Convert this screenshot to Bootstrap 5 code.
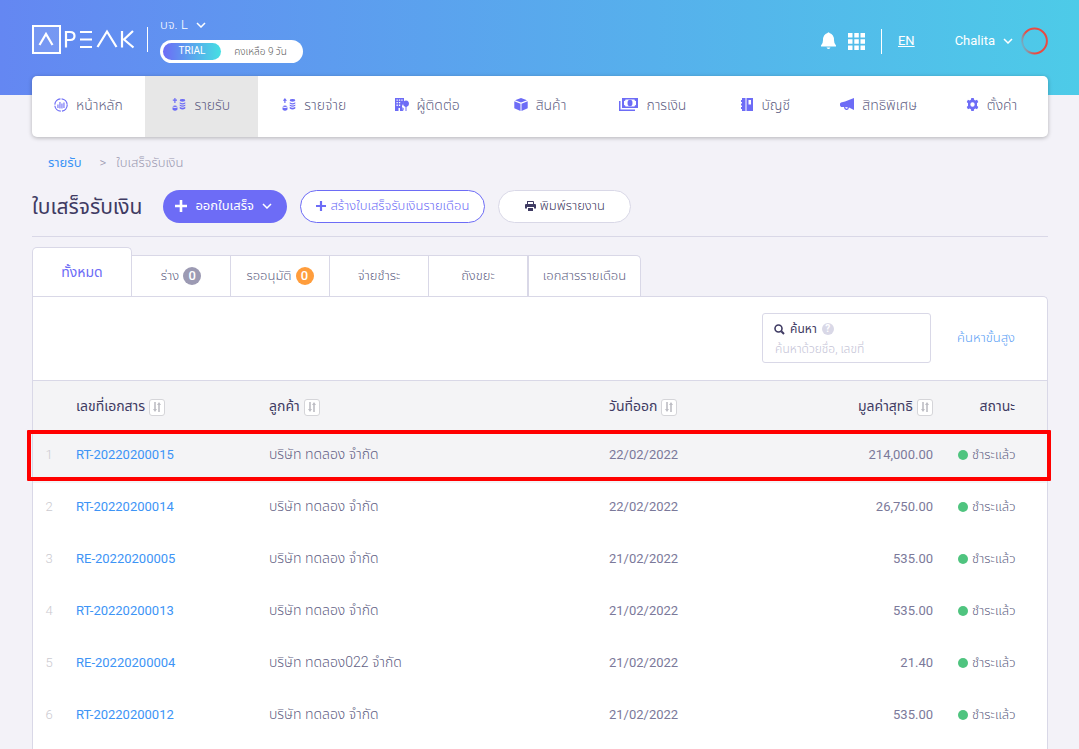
<!DOCTYPE html>
<html lang="th">
<head>
<meta charset="utf-8">
<meta name="viewport" content="width=device-width, initial-scale=1">
<title>ใบเสร็จรับเงิน</title>
<link href="https://cdn.jsdelivr.net/npm/bootstrap@5.3.0/dist/css/bootstrap.min.css" rel="stylesheet">
<style>
:root{--brand:#6d6cf6;--line:#d9d8e7;--ink:#625f84;--dark:#3f3b63;--sky:#3d94f6}
body{font-family:Roboto,"Noto Sans Thai","Noto Sans",sans-serif;font-size:13px;line-height:20px;font-weight:300;color:var(--ink);background:#f3f2f8}
a{text-decoration:none;color:var(--sky)}
svg{fill:currentColor;flex:none}
.shell{padding:0 31px 0 32px}
.topbar{background:linear-gradient(90deg,#6487f2,#4dcbe8);height:95px;color:#fff}
.topbar a,.topbar button{color:#fff}
.brand-row{padding-top:15px;gap:12px}
.plain-btn{background:none;border:0;padding:0;font-weight:300}
.vline{width:1px;height:25px;background:#fff}
.brand-line{margin-top:12px}
.trial{width:143px;height:23px;font-size:10px;background:#fff;color:#5b5b5b;padding:3px;margin-top:5px}
.trial-tag{width:58px;height:17px;line-height:16px;background:linear-gradient(90deg,#6d6cf6,#45e0e3);color:#fff;font-weight:400}
.main-menu{margin-top:-19px;height:61px;background:#fff;border-radius:5px;box-shadow:0 1px 4px #0004}
.main-menu a{flex:1 1 0;color:var(--ink);font-size:14px;padding-bottom:4px}
.main-menu a.active{background:#e7e7e7}
.main-menu svg{color:var(--brand)}
.crumbs{gap:10px;color:#9a98b0}
.page-title{font-size:21px;line-height:32px;font-weight:400;color:var(--dark)}
.title-row{padding:17px 0 13px;gap:13px;border-bottom:1px solid var(--line);margin-bottom:10px}
.pill{height:33px;border-radius:17px;font-size:13px;font-weight:300;line-height:20px;padding:0 11px 2px}
.pill-brand,.pill-brand:hover{background:var(--brand);color:#fff;width:124px;font-weight:400}
.pill-line,.pill-line:hover{background:#fff;border-color:var(--brand);color:var(--brand);width:185px}
.pill-gray,.pill-gray:hover{background:#fff;border-color:var(--line);color:var(--dark);width:133px}
.tab-row a{width:99px;height:41px;background:#fff;border:1px solid var(--line);border-left:0;border-bottom:0;color:var(--ink)}
.tab-row a.active{width:100px;height:49px;border-left:1px solid var(--line);border-radius:5px 5px 0 0;color:var(--brand);font-size:14px;font-weight:400}
.tab-row a.wide{width:113px;border-left:1px solid var(--line);border-radius:0 5px 0 0}
.count{width:18px;height:18px;line-height:18px;border-radius:9px;color:#fff;font-weight:500;background:#9c9ab3}
.count.wait{background:#ff9d3c}
.panel{background:#fff;border:1px solid var(--line);border-bottom:0;border-radius:0 5px 0 0}
.tools{padding:16px 32px 17px;gap:26px}
.tools>a{color:#5b9ff5}
.search-box{width:169px;height:50px;border:1px solid var(--line);border-radius:3px;padding:5px 11px}
.search-box label{color:var(--dark);font-size:12px;font-weight:400;line-height:20px;gap:5px}
.search-box input{border:0;padding:0 1px;width:100%;height:18px;font-size:12px;font-weight:300;outline:0}
.search-box input::placeholder{color:#c4c3d6;opacity:1}
.help{width:12px;height:12px;line-height:12px;font-size:10px;border-radius:6px;background:var(--line);color:#fff;font-weight:700}
.docs{table-layout:fixed;border-collapse:separate;border-spacing:0}
.docs th{height:51px;background:#f4f4f6;border-top:1px solid var(--line);font-size:14px;font-weight:400;color:var(--dark);padding:0;white-space:nowrap}
.docs td{height:52px;padding:0 0 5px;white-space:nowrap}
.docs .picked td{background:#f4f4f6}
.docs td.num{text-align:center;color:#cbcad0;padding-right:11px}
.docs td a,.docs .digits{font-weight:400}
.docs .digits{color:#7b799a}
.docs .firm{font-size:14px;padding-bottom:6px}
.c-num{width:43px}.c-doc{width:193px}.c-date{width:180px}.c-sum{width:144px}.c-state{width:114px}
.docs .c-state{font-size:14px;padding-right:32px}
.state{gap:4px;margin-left:25px}
.sorter{width:16px;height:17px;border:1px solid #d5d5d9;border-radius:3px;background:#fff;color:#bdbdc4;padding:0;margin-left:4px;vertical-align:middle}
.dot{width:10px;height:10px;border-radius:5px;background:#4fc47f}
.outline-red{position:absolute;left:-6px;right:-4px;top:-1px;bottom:2px;border:4px solid #f00;border-radius:1px;pointer-events:none}
</style>
</head>
<body class="min-vh-100 d-flex flex-column">
<svg width="0" height="0" class="position-absolute" aria-hidden="true">
<symbol id="down" viewBox="0 0 10 6"><path d="M1 1l4 4 4-4" fill="none" stroke="currentColor" stroke-width="1.5"/></symbol>
<symbol id="plus" viewBox="0 0 12 12"><path d="M4.700 0h2.600v4.700H12v2.600H7.300V12H4.700V7.300H0V4.700h4.700z"/></symbol>
<symbol id="sort" viewBox="0 0 10 10"><path d="M2.200 0h1.600v7H5L3 10 1 7h1.200zM6.200 10h1.600V3H9L7 0 5 3h1.200z"/></symbol>
<symbol id="coins" viewBox="0 0 8 13"><ellipse cx="4" cy="1.700" rx="3.200" ry="1.600"/><path d="M.8 4q3.200 2 6.400 0v1.400q-3.200 2-6.400 0zM.8 6.600q3.200 2 6.400 0V8Q4 10 .8 8zM.8 9.200q3.200 2 6.400 0v1.900q-3.200 2.500-6.400 0z"/></symbol>
</svg>

<header class="topbar">
<div class="shell">
<div class="brand-row d-flex">
<a href="#" aria-label="PEAK" class="mt-2">
<svg width="103" height="31" viewBox="0 0 103 31" style="fill:none" stroke="#fff"><rect x="1" y="3" width="27" height="27" stroke-width="2" fill="#fff" fill-opacity=".12"/><path d="M7.500 22l6.500-11 6.500 11M65.500 24L75 8.500 84.500 24" stroke-width="2.200"/><path d="M34 24.500V9h4q4.500 0 4.500 4t-4.500 4h-4M48 9h12M48 16.500h12M48 24h12M90 8v16.500M101 8l-9 8.500 9.500 8" stroke-width="2.200"/></svg>
</a>
<div class="vline brand-line" aria-hidden="true"></div>
<div>
<button class="plain-btn d-flex align-items-center gap-2" type="button">บจ. L <svg width="10" height="6"><use href="#down"/></svg></button>
<div class="trial rounded-pill d-flex"><span class="trial-tag rounded-pill text-center">TRIAL</span><span class="flex-fill text-center lh-1 align-self-center">คงเหลือ 9 วัน</span></div>
</div>
<div class="ms-auto d-flex align-items-center align-self-start mt-2 pt-1">
<button class="plain-btn d-flex me-2 pe-1" type="button" aria-label="แจ้งเตือน"><svg width="15" height="18" viewBox="0 0 15 18"><path d="M6.500 1q1-1.500 2 0Q13 2.500 13 8q0 4 2 5.500v1H0v-1Q2 12 2 8 2 2.500 6.500 1zM5.500 15.500h4q-2 3-4 0z"/></svg></button>
<button class="plain-btn d-flex me-3" type="button" aria-label="เมนู"><svg width="17" height="17" viewBox="0 0 17 17"><path d="M0 0h4.500v4.500H0zM6.300 0h4.500v4.500H6.300zM12.500 0H17v4.500h-4.500zM0 6.300h4.500v4.500H0zM6.300 6.300h4.500v4.500H6.300zM12.500 6.300H17v4.500h-4.500zM0 12.500h4.500V17H0zM6.300 12.500h4.500V17H6.300zM12.500 12.500H17V17h-4.500z"/></svg></button>
<div class="vline me-3" aria-hidden="true"></div>
<a href="#" class="text-decoration-underline fw-normal me-4">EN</a>
<button class="plain-btn d-flex align-items-center gap-2 ms-3 fw-normal" type="button">Chalita <svg width="10" height="6"><use href="#down"/></svg>
<svg width="27" height="28" viewBox="0 0 27 28" style="fill:none"><defs><linearGradient id="ring" x1="0" y1=".7" x2=".8" y2=".4"><stop offset="0" stop-color="#e94b43" stop-opacity=".1"/><stop offset=".4" stop-color="#e94b43"/></linearGradient></defs><circle cx="13.500" cy="14" r="12.400" stroke="url(#ring)" stroke-width="2"/></svg></button>
</div>
</div>
</div>
</header>

<div class="shell flex-fill d-flex flex-column">
<nav class="main-menu d-flex overflow-hidden flex-shrink-0" aria-label="เมนูหลัก">
<a href="#" class="d-flex align-items-center justify-content-center gap-2"><svg width="14" height="14" viewBox="0 0 14 14"><circle cx="7" cy="7" r="6.200" fill="none" stroke="currentColor" stroke-width="1.200" stroke-dasharray="8.500 1.200"/><path d="M3.400 6.500h1.100V10H3.400zM5.400 4h1.100v6.500H5.400zM7.400 5.500h1.100v5H7.400zM9.400 4.500h1.100V10H9.400z"/></svg>หน้าหลัก</a>
<a href="#" class="active d-flex align-items-center justify-content-center gap-2"><svg width="14" height="13" viewBox="0 0 14 13"><path d="M2.300 0h1.200v1.600H5v1.200H3.500V5H2.300V2.800H.8V1.600h1.500zM.5 9.200q2.500 1.500 5 0v2.300q-2.500 2.500-5 0zM.5 8.300q2.500-1.800 5 0-2.500 1.300-5 0z"/><use href="#coins" x="7" width="7" height="13"/></svg>รายรับ</a>
<a href="#" class="d-flex align-items-center justify-content-center gap-2"><svg width="14" height="13" viewBox="0 0 14 13"><path d="M2.300 5h1.200V2.700H5L2.900 0 .8 2.700h1.500zM.5 9.200q2.500 1.500 5 0v2.300q-2.500 2.500-5 0zM.5 8.300q2.500-1.800 5 0-2.500 1.300-5 0z"/><use href="#coins" x="7" width="7" height="13"/></svg>รายจ่าย</a>
<a href="#" class="d-flex align-items-center justify-content-center gap-2"><svg width="14" height="13" viewBox="0 0 14 13"><path fill-rule="evenodd" d="M0 0h9v4L7 8v5H5v-3H3.500v3H0zM1.500 1.500v1.300h1.300V1.500zm2.400 0v1.300h1.300V1.500zm2.400 0v1.300h1.300V1.500zM1.500 4v1.300h1.300V4zm2.400 0v1.300h1.300V4zm-2.400 2.600v1.300h1.300V6.600zm2.400 0v1.300h1.300V6.600z"/><path d="M11 2.500q3 0 3 3.500 0 2-2.500 3v4h-1V9Q8 8 8 6q0-3.500 3-3.500zM7.500 9q2 1.500 1 3l-.5 1h-1z"/></svg>ผู้ติดต่อ</a>
<a href="#" class="d-flex align-items-center justify-content-center gap-2"><svg width="14" height="13" viewBox="0 0 14 13"><path d="M7 0l6 2.200L7 4.600 1 2.200zM.3 3.300l6.200 2.500V13L.3 10.300zM13.700 3.300L7.500 5.800V13l6.200-2.700z"/></svg>สินค้า</a>
<a href="#" class="d-flex align-items-center justify-content-center gap-2"><svg width="19" height="13" viewBox="0 0 19 13"><path fill-rule="evenodd" d="M3 0h16v10H3zM5 3v4q1.500 0 1.500 1.500h9Q15.500 7 17 7V3q-1.500 0-1.500-1.500h-9Q6.500 3 5 3z"/><ellipse cx="11" cy="5" rx="2.500" ry="3.300"/><path d="M0 3h1.500v8.500H16V13H0z"/></svg>การเงิน</a>
<a href="#" class="d-flex align-items-center justify-content-center gap-2"><svg width="12" height="13" viewBox="0 0 12 13"><path fill-rule="evenodd" d="M1 0h3.500v13H1v-2H0V9h1V7.500H0v-2h1V4H0V2h1zM5.500 0H12v13H5.500zM7.500 2v4.500h2.500V2z"/></svg>บัญชี</a>
<a href="#" class="d-flex align-items-center justify-content-center gap-2"><svg width="14" height="13" viewBox="0 0 14 13"><path fill-rule="evenodd" d="M14 0v12L9 9.500q-.5 3-3 2.500-2-.5-2-3H1L0 7.500v-2L1 4.500 5 3.500zM5.200 9q.3 1.500 1.300 1.700 1 0 1.300-1.500z"/></svg>สิทธิพิเศษ</a>
<a href="#" class="d-flex align-items-center justify-content-center gap-2"><svg width="13" height="13" viewBox="0 0 16 16"><path fill-rule="evenodd" d="M6.500 0h3l.5 2.200 1.400.8 2.200-.8 1.500 2.600L13.500 6.500v3l1.600 1.700-1.500 2.600-2.200-.8-1.400.8-.5 2.200h-3L6 13.800 4.600 13l-2.200.8L.9 11.200l1.600-1.700v-3L.9 4.800l1.500-2.600 2.200.8L6 2.200zM8 5.300a2.700 2.700 0 1 0 0 5.400 2.700 2.700 0 0 0 0-5.400z"/></svg>ตั้งค่า</a>
</nav>

<nav class="crumbs d-flex px-3 pt-3" aria-label="breadcrumb"><a href="#" class="fw-normal me-2">รายรับ</a><span>&gt;</span><span>ใบเสร็จรับเงิน</span></nav>

<div class="title-row d-flex align-items-center">
<h1 class="page-title mb-0 me-2">ใบเสร็จรับเงิน</h1>
<button type="button" class="btn pill pill-brand d-flex align-items-center gap-2"><svg width="12" height="12"><use href="#plus"/></svg>ออกใบเสร็จ<svg width="10" height="6"><use href="#down"/></svg></button>
<button type="button" class="btn pill pill-line d-flex align-items-center justify-content-center gap-1"><svg width="10" height="10"><use href="#plus"/></svg>สร้างใบเสร็จรับเงินรายเดือน</button>
<button type="button" class="btn pill pill-gray d-flex align-items-center justify-content-center gap-1"><svg width="11" height="10" viewBox="0 0 11 10"><path fill-rule="evenodd" d="M2 0h6.500L9 1v2h1q1 0 1 1v3.500H9V6H2v1.500H0V4q0-1 1-1h1zM3 1v2h5V1zM3 7h5v3H3z"/></svg>พิมพ์รายงาน</button>
</div>

<nav class="tab-row d-flex align-items-end" aria-label="สถานะเอกสาร">
<a href="#" class="active d-flex align-items-center justify-content-center">ทั้งหมด</a>
<a href="#" class="d-flex align-items-center justify-content-center gap-1">ร่าง<span class="count text-center">0</span></a>
<a href="#" class="d-flex align-items-center justify-content-center gap-1">รออนุมัติ<span class="count wait text-center">0</span></a>
<a href="#" class="d-flex align-items-center justify-content-center">จ่ายชำระ</a>
<a href="#" class="d-flex align-items-center justify-content-center">ถังขยะ</a>
<a href="#" class="wide d-flex align-items-center justify-content-center">เอกสารรายเดือน</a>
</nav>

<main class="panel flex-fill">
<form class="tools d-flex justify-content-end align-items-center">
<div class="search-box"><label for="q" class="d-flex align-items-center"><svg width="11" height="11" viewBox="0 0 11 11"><path d="M7.300 7.300L10 10" stroke="currentColor" stroke-width="2"/><circle cx="4.500" cy="4.500" r="3.500" fill="none" stroke="currentColor" stroke-width="1.600"/></svg><span>ค้นหา</span><span class="help text-center">?</span></label><input id="q" type="text" placeholder="ค้นหาด้วยชื่อ, เลขที่"></div>
<a href="#">ค้นหาขั้นสูง</a>
</form>
<table class="docs w-100">
<thead><tr><th class="c-num"></th><th class="c-doc">เลขที่เอกสาร<button class="sorter" type="button" aria-label="เรียง"><svg width="10" height="10" class="d-block mx-auto"><use href="#sort"/></svg></button></th><th>ลูกค้า<button class="sorter" type="button" aria-label="เรียง"><svg width="10" height="10" class="d-block mx-auto"><use href="#sort"/></svg></button></th><th class="c-date">วันที่ออก<button class="sorter" type="button" aria-label="เรียง"><svg width="10" height="10" class="d-block mx-auto"><use href="#sort"/></svg></button></th><th class="c-sum text-end">มูลค่าสุทธิ<button class="sorter" type="button" aria-label="เรียง"><svg width="10" height="10" class="d-block mx-auto"><use href="#sort"/></svg></button></th><th class="c-state text-end">สถานะ</th></tr></thead>
<tbody>
<tr class="picked position-relative"><td class="num">1<span class="outline-red"></span></td><td><a href="#">RT-20220200015</a></td><td class="firm">บริษัท ทดลอง จำกัด</td><td class="digits">22/02/2022</td><td class="digits text-end">214,000.00</td><td><span class="state d-flex align-items-center"><span class="dot"></span>ชำระแล้ว</span></td></tr>
<tr><td class="num">2</td><td><a href="#">RT-20220200014</a></td><td class="firm">บริษัท ทดลอง จำกัด</td><td class="digits">22/02/2022</td><td class="digits text-end">26,750.00</td><td><span class="state d-flex align-items-center"><span class="dot"></span>ชำระแล้ว</span></td></tr>
<tr><td class="num">3</td><td><a href="#">RE-20220200005</a></td><td class="firm">บริษัท ทดลอง จำกัด</td><td class="digits">21/02/2022</td><td class="digits text-end">535.00</td><td><span class="state d-flex align-items-center"><span class="dot"></span>ชำระแล้ว</span></td></tr>
<tr><td class="num">4</td><td><a href="#">RT-20220200013</a></td><td class="firm">บริษัท ทดลอง จำกัด</td><td class="digits">21/02/2022</td><td class="digits text-end">535.00</td><td><span class="state d-flex align-items-center"><span class="dot"></span>ชำระแล้ว</span></td></tr>
<tr><td class="num">5</td><td><a href="#">RE-20220200004</a></td><td class="firm">บริษัท ทดลอง022 จำกัด</td><td class="digits">21/02/2022</td><td class="digits text-end">21.40</td><td><span class="state d-flex align-items-center"><span class="dot"></span>ชำระแล้ว</span></td></tr>
<tr><td class="num">6</td><td><a href="#">RT-20220200012</a></td><td class="firm">บริษัท ทดลอง จำกัด</td><td class="digits">21/02/2022</td><td class="digits text-end">535.00</td><td><span class="state d-flex align-items-center"><span class="dot"></span>ชำระแล้ว</span></td></tr>
</tbody>
</table>
</main>
</div>
<script src="https://cdn.jsdelivr.net/npm/bootstrap@5.3.0/dist/js/bootstrap.bundle.min.js"></script>
</body>
</html>
